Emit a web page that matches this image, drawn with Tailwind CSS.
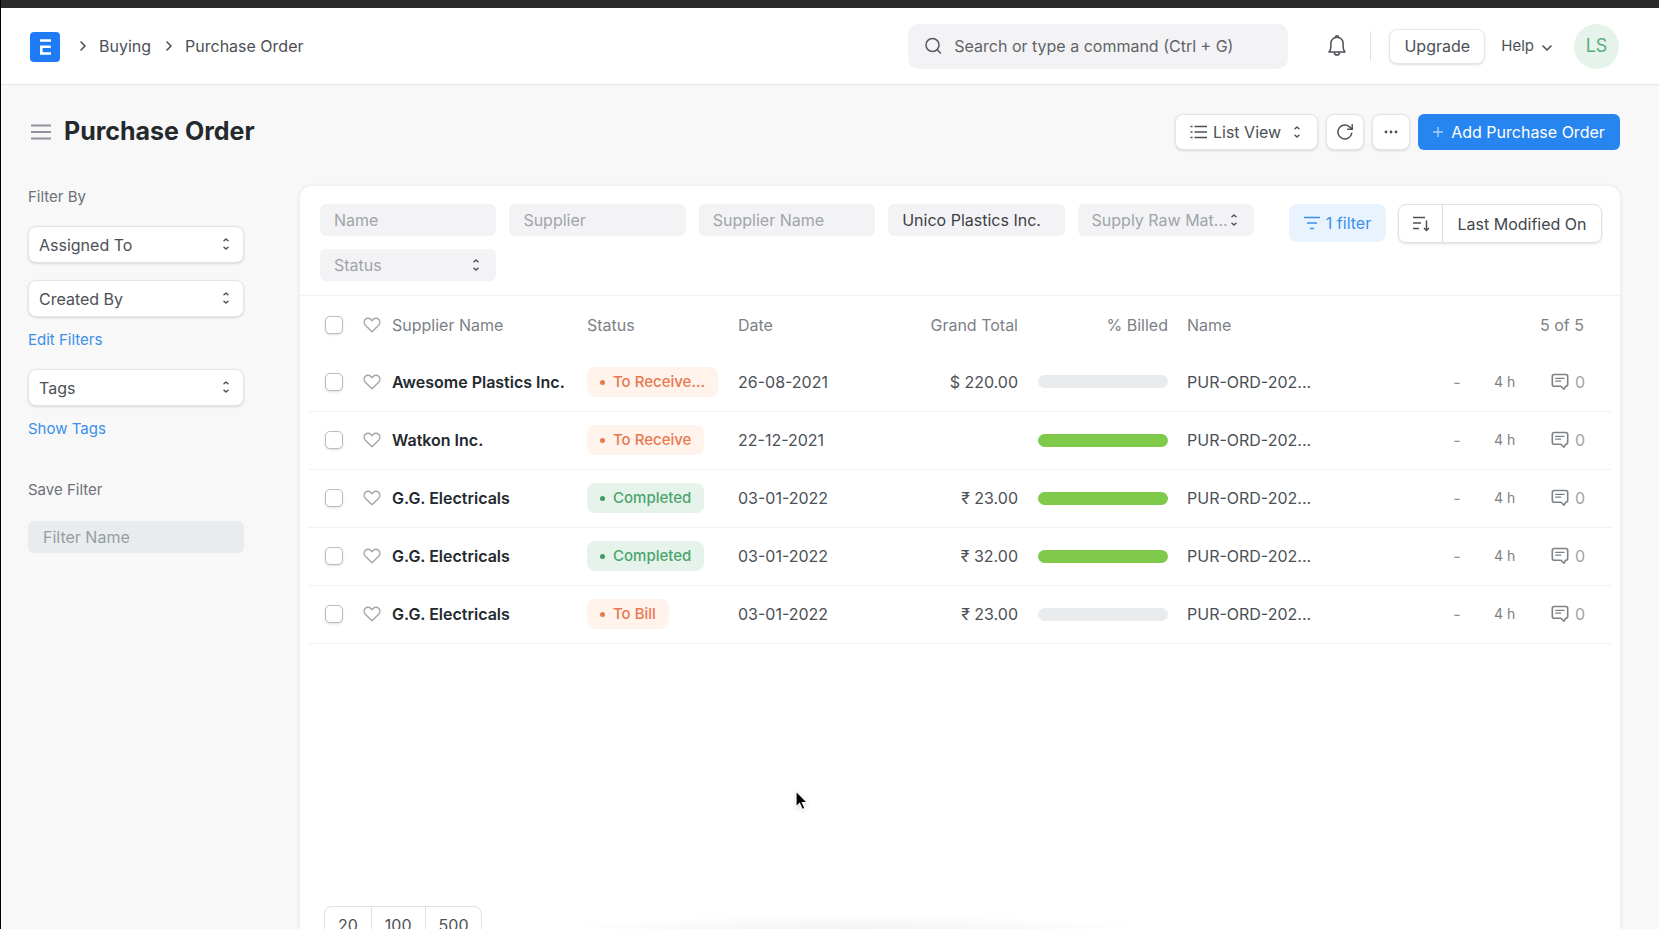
<!DOCTYPE html>
<html lang="en">
<head>
<meta charset="utf-8">
<meta name="viewport" content="width=device-width, initial-scale=1">
<title>Purchase Order</title>
<script src="https://cdn.jsdelivr.net/npm/@tailwindcss/browser@4"></script>
</head>
<body class="h-screen overflow-hidden bg-[#f8f8f8] font-['Inter','Noto_Sans',sans-serif] text-base text-[#4c5055]">

<svg class="hidden" aria-hidden="true">
  <symbol id="updown" viewBox="0 0 8 14"><path d="M2 3.800 4 2l2 1.800M2 10.200 4 12l2-1.800" fill="none" stroke="currentColor" stroke-width="1.500" stroke-linecap="round" stroke-linejoin="round"/></symbol>
  <symbol id="right" viewBox="0 0 8 12"><path d="M2 2l4 4-4 4" fill="none" stroke="currentColor" stroke-width="1.600" stroke-linecap="round" stroke-linejoin="round"/></symbol>
  <symbol id="heart" viewBox="0 0 18 16"><path d="M9 14.800 2.300 8.200C.8 6.600.7 4.100 2.200 2.500c1.500-1.600 4.100-1.600 5.600 0L9 3.600l1.200-1.100c1.500-1.600 4.100-1.600 5.600 0 1.500 1.600 1.400 4.100-.1 5.700L9 14.800Z" fill="none" stroke="currentColor" stroke-width="1.500" stroke-linejoin="round"/></symbol>
  <symbol id="comment" viewBox="0 0 18 18"><path d="M3.300 1.500h11.400c1.200 0 2 .8 2 2v7.700c0 1.200-.8 2-2 2v0l-1.700 3-3-3H3.300c-1.200 0-2-.8-2-2V3.500c0-1.200.8-2 2-2Z" fill="none" stroke="currentColor" stroke-width="1.600" stroke-linejoin="round"/><path d="M4.700 5.400h8.300M4.700 8.200h5" stroke="currentColor" stroke-width="1.300" stroke-linecap="round"/></symbol>
</svg>

<div class="flex h-full flex-col border-l border-black">
  <div class="h-2 shrink-0 bg-[#2b2b2b]"></div>

  <header class="flex h-[77px] shrink-0 items-center border-b border-[#e6e8e8] bg-white pr-10 pl-[29px]">
    <a href="#" aria-label="Home" class="mt-[2px] block size-[30px]">
      <svg viewBox="0 0 30 30" class="size-full"><rect width="30" height="30" rx="4" fill="#1f7af5"/><path d="M10 8.500h11M10 14.800h10.700M11.300 14.800v6.700h9.700" fill="none" stroke="#fff" stroke-width="2.600"/></svg>
    </a>
    <nav class="flex items-center" aria-label="Breadcrumb">
      <svg class="ml-[19px] h-3 w-2"><use href="#right"/></svg>
      <a href="#" class="ml-3">Buying</a>
      <svg class="ml-[14px] h-3 w-2"><use href="#right"/></svg>
      <a href="#" class="ml-3">Purchase Order</a>
    </nav>
    <div class="ml-auto flex items-center">
      <label class="flex h-[45px] w-[380px] items-center rounded-[10px] bg-[#f3f3f5] pr-4 pl-4 text-[#555a60]">
        <svg viewBox="0 0 18 18" class="size-[18px] shrink-0"><circle cx="8.500" cy="8" r="6.500" fill="none" stroke="currentColor" stroke-width="1.500"/><path d="m13.200 12.700 3.300 3.300" stroke="currentColor" stroke-width="1.500" stroke-linecap="round"/></svg>
        <input type="text" aria-label="Search" placeholder="Search or type a command (Ctrl + G)" class="ml-3 min-w-0 flex-1 bg-transparent outline-none placeholder:text-[#5f6368]">
      </label>
      <button aria-label="Notifications" class="ml-10 text-[#4c5055]">
        <svg viewBox="0 0 18 22" class="h-[22px] w-[18px]"><path d="M1 17h16c-1.500-1.300-1.900-3.200-1.900-5.400V8.200c0-3.300-2.700-5.900-6.100-5.900S2.900 4.900 2.900 8.200v3.400c0 2.200-.4 4.100-1.900 5.400Z" fill="none" stroke="currentColor" stroke-width="1.500" stroke-linejoin="round"/><path d="M7.500 2.200C7.500 1.300 8.100.8 9 .8s1.500.5 1.500 1.400M6.300 17.300c.2 1.600 1.200 2.700 2.700 2.700s2.500-1.100 2.700-2.700" fill="none" stroke="currentColor" stroke-width="1.500"/></svg>
      </button>
      <div class="ml-6 h-[30px] w-px bg-[#dfe1e3]"></div>
      <button class="ml-[18px] h-[35px] w-[96px] rounded-lg border border-[#e4e6e8] bg-white shadow-sm">Upgrade</button>
      <button class="ml-4 flex items-center gap-2 text-[15px]">Help
        <svg viewBox="0 0 10 6" class="mt-1 h-[6px] w-[10px]"><path d="m1 1 4 4 4-4" fill="none" stroke="currentColor" stroke-width="1.600" stroke-linecap="round" stroke-linejoin="round"/></svg>
      </button>
      <button class="ml-[22px] size-[45px] rounded-full bg-[#e6f3ea] text-lg text-[#59ac7b]">LS</button>
    </div>
  </header>

  <div class="flex h-[95px] shrink-0 items-center pr-[39px] pb-[2px] pl-[30px]">
    <button aria-label="Toggle sidebar" class="text-[#8f959b]"><svg viewBox="0 0 20 16" class="h-4 w-5"><path d="M0 1.500h20M0 8h20M0 14.500h20" stroke="currentColor" stroke-width="1.800"/></svg></button>
    <h1 class="ml-[13px] text-[25px] font-bold text-[#24292e]">Purchase Order</h1>
    <div class="ml-auto flex gap-2">
      <button class="flex h-9 w-[143px] items-center rounded-lg border border-[#e2e4e6] bg-white pr-4 pl-[14px] shadow-sm">
        <svg viewBox="0 0 17 14" class="mr-[6px] h-[14px] w-[17px]"><path d="M4.500 1.500H17M4.500 7H17M4.500 12.500H17M.5 1.500h2M.5 7h2M.5 12.500h2" stroke="currentColor" stroke-width="1.500"/></svg>
        List View
        <svg class="ml-auto h-[14px] w-2"><use href="#updown"/></svg>
      </button>
      <button aria-label="Refresh" class="flex h-9 w-[38px] items-center justify-center rounded-lg border border-[#e2e4e6] bg-white shadow-sm">
        <svg viewBox="0 0 18 18" class="size-[18px]"><path d="M15.800 10.200A7 7 0 1 1 14.200 4.400L15.800 6" fill="none" stroke="currentColor" stroke-width="1.500" stroke-linecap="round"/><path d="M16.200 1.800v4.400h-4.400" fill="none" stroke="currentColor" stroke-width="1.500" stroke-linecap="round"/></svg>
      </button>
      <button aria-label="More" class="flex h-9 w-[38px] items-center justify-center rounded-lg border border-[#e2e4e6] bg-white shadow-sm">
        <svg viewBox="0 0 14 4" class="h-1 w-[14px]"><g fill="currentColor"><circle cx="2" cy="2" r="1.400"/><circle cx="7" cy="2" r="1.400"/><circle cx="12" cy="2" r="1.400"/></g></svg>
      </button>
      <button class="flex h-9 w-[202px] items-center justify-center gap-2 rounded-md bg-[#2685ee] text-white">
        <svg viewBox="0 0 10 10" class="size-[10px]"><path d="M5 0v10M0 5h10" stroke="#a9d0fb" stroke-width="1.400"/></svg>Add Purchase Order
      </button>
    </div>
  </div>

  <div class="flex min-h-0 flex-1 pr-[39px] pl-[27px]">
    <aside class="w-[216px] shrink-0 pt-[5px]">
      <h2 class="text-[15px] leading-6 text-[#6c7278]">Filter By</h2>
      <div class="relative mt-[17px]">
        <select aria-label="Assigned To" class="h-[37px] w-full appearance-none rounded-lg border border-[#e2e4e6] bg-white px-[10px] shadow-sm"><option>Assigned To</option></select>
        <svg class="pointer-events-none absolute top-[11px] right-[14px] h-[14px] w-2"><use href="#updown"/></svg>
      </div>
      <div class="relative mt-[17px]">
        <select aria-label="Created By" class="h-[37px] w-full appearance-none rounded-lg border border-[#e2e4e6] bg-white px-[10px] shadow-sm"><option>Created By</option></select>
        <svg class="pointer-events-none absolute top-[11px] right-[14px] h-[14px] w-2"><use href="#updown"/></svg>
      </div>
      <a href="#" class="mt-[11px] block text-[15px] leading-6 text-[#3b8fea]">Edit Filters</a>
      <div class="relative mt-[17px]">
        <select aria-label="Tags" class="h-[37px] w-full appearance-none rounded-lg border border-[#e2e4e6] bg-white px-[10px] shadow-sm"><option>Tags</option></select>
        <svg class="pointer-events-none absolute top-[11px] right-[14px] h-[14px] w-2"><use href="#updown"/></svg>
      </div>
      <a href="#" class="mt-[11px] block text-[15px] leading-6 text-[#3b8fea]">Show Tags</a>
      <label for="filter-name" class="mt-[37px] block text-[15px] leading-6 text-[#6c7278]">Save Filter</label>
      <input id="filter-name" type="text" placeholder="Filter Name" class="mt-[19px] h-8 w-full rounded-md bg-[#e9ecee] px-[15px] outline-none placeholder:text-[#969ca2]">
    </aside>

    <main class="mt-[6px] ml-14 flex min-w-0 flex-1 flex-col rounded-t-xl bg-white pt-[18px] shadow-[0_0_5px_rgba(0,0,0,0.09)]">
      <div class="flex shrink-0 border-b border-[#f2f3f4] pr-[18px] pb-[14px] pl-5">
        <div class="grid w-[934px] grid-cols-5 gap-[13px]">
          <input aria-label="Name" placeholder="Name" class="h-8 min-w-0 rounded-md bg-[#f3f3f5] px-[14px] outline-none placeholder:text-[#a0a4a9]">
          <input aria-label="Supplier" placeholder="Supplier" class="h-8 min-w-0 rounded-md bg-[#f3f3f5] px-[14px] outline-none placeholder:text-[#a0a4a9]">
          <input aria-label="Supplier Name" placeholder="Supplier Name" class="h-8 min-w-0 rounded-md bg-[#f3f3f5] px-[14px] outline-none placeholder:text-[#a0a4a9]">
          <input aria-label="Company" value="Unico Plastics Inc." class="h-8 min-w-0 rounded-md bg-[#f3f3f5] px-[14px] text-[#3c4045] outline-none">
          <div class="relative">
            <select aria-label="Supply Raw Materials" class="h-8 w-full appearance-none rounded-md bg-[#f3f3f5] px-[14px] text-[#a0a4a9]"><option>Supply Raw Mat...</option></select>
            <svg class="pointer-events-none absolute top-[9px] right-4 h-[14px] w-2"><use href="#updown"/></svg>
          </div>
          <div class="relative">
            <select aria-label="Status" class="h-8 w-full appearance-none rounded-md bg-[#f3f3f5] px-[14px] text-[#a0a4a9]"><option>Status</option></select>
            <svg class="pointer-events-none absolute top-[9px] right-4 h-[14px] w-2"><use href="#updown"/></svg>
          </div>
        </div>
        <div class="ml-auto flex">
          <button class="mr-3 flex h-[38px] w-[97px] items-center justify-center gap-[6px] rounded-lg bg-[#e9f3fe] text-[#3b8fea]">
            <svg viewBox="0 0 16 14" class="h-[14px] w-4"><path d="M0 1.500h16M3 7h10M6 12.500h4" stroke="currentColor" stroke-width="1.600"/></svg>1 filter
          </button>
          <div class="flex h-[39px] rounded-lg border border-[#e0e2e4] shadow-sm">
            <button aria-label="Sort direction" class="flex w-11 items-center justify-center border-r border-[#dcdee0]">
              <svg viewBox="0 0 18 16" class="h-4 w-[18px]"><path d="M1 1.500h12M1 7h8M1 12.500h6M14.500 4.500v10M12 12l2.500 2.500L17 12" fill="none" stroke="currentColor" stroke-width="1.500"/></svg>
            </button>
            <button class="w-[158px] text-[#43474c]">Last Modified On</button>
          </div>
        </div>
      </div>

      <div class="min-h-[610px] shrink-0 px-2">
        <table class="w-full table-fixed text-left">
          <colgroup><col class="w-[55px]"><col class="w-[29px]"><col class="w-[195px]"><col class="w-[151px]"><col class="w-[130px]"><col class="w-[150px]"><col class="w-[150px]"><col><col class="w-[74px]"><col class="w-[48px]"><col class="w-[70px]"></colgroup>
          <thead>
            <tr class="h-[57px] text-[#7c8186] [&>th]:p-0 [&>th]:font-normal">
              <th><input type="checkbox" aria-label="Select all" class="ml-[17px] block size-[18px] appearance-none rounded-[5px] border border-[#b9bdc1] bg-white shadow-sm"></th>
              <th><button aria-label="Liked" class="block text-[#a3a8ad]"><svg class="h-4 w-[18px]"><use href="#heart"/></svg></button></th>
              <th>Supplier Name</th><th>Status</th><th>Date</th>
              <th><div class="text-right">Grand Total</div></th>
              <th><div class="text-right">% Billed</div></th>
              <th><div class="pl-[19px]">Name</div></th>
              <th colspan="3"><div class="pr-7 text-right">5 of 5</div></th>
            </tr>
          </thead>
          <tbody class="[&_td]:p-0">
            <tr class="h-[58px] border-b border-[#f2f3f4]">
              <td><input type="checkbox" aria-label="Select Awesome Plastics Inc." class="ml-[17px] block size-[18px] appearance-none rounded-[5px] border border-[#b9bdc1] bg-white shadow-sm"></td>
              <td><button aria-label="Like" class="block text-[#a3a8ad]"><svg class="h-4 w-[18px]"><use href="#heart"/></svg></button></td>
              <td class="font-semibold whitespace-nowrap text-[#24292e]">Awesome Plastics Inc.</td>
              <td><span class="inline-flex h-[30px] items-center gap-2 rounded-lg bg-[#fff3ec] px-[13px] text-[15px] font-medium text-[#e8794f]"><i class="size-[5px] rounded-full bg-[#e8794f]"></i>To Receive...</span></td>
              <td>26-08-2021</td>
              <td class="text-right">$ 220.00</td>
              <td><div class="ml-5 h-[13px] rounded-full bg-[#e9ebec]"></div></td>
              <td><a href="#" class="pl-[19px]">PUR-ORD-202...</a></td>
              <td class="text-center text-[#8d9298]">-</td>
              <td class="text-sm text-[#7c8186]">4 h</td>
              <td><div class="flex items-center justify-end gap-[6px] pr-[27px] text-[#7c8186]"><svg class="size-[18px]"><use href="#comment"/></svg><span class="text-[#a0a4a9]">0</span></div></td>
            </tr>
            <tr class="h-[58px] border-b border-[#f2f3f4]">
              <td><input type="checkbox" aria-label="Select Watkon Inc." class="ml-[17px] block size-[18px] appearance-none rounded-[5px] border border-[#b9bdc1] bg-white shadow-sm"></td>
              <td><button aria-label="Like" class="block text-[#a3a8ad]"><svg class="h-4 w-[18px]"><use href="#heart"/></svg></button></td>
              <td class="font-semibold whitespace-nowrap text-[#24292e]">Watkon Inc.</td>
              <td><span class="inline-flex h-[30px] items-center gap-2 rounded-lg bg-[#fff3ec] px-[13px] text-[15px] font-medium text-[#e8794f]"><i class="size-[5px] rounded-full bg-[#e8794f]"></i>To Receive</span></td>
              <td>22-12-2021</td>
              <td></td>
              <td><div class="ml-5 h-[13px] rounded-full bg-[#7fc94b]"></div></td>
              <td><a href="#" class="pl-[19px]">PUR-ORD-202...</a></td>
              <td class="text-center text-[#8d9298]">-</td>
              <td class="text-sm text-[#7c8186]">4 h</td>
              <td><div class="flex items-center justify-end gap-[6px] pr-[27px] text-[#7c8186]"><svg class="size-[18px]"><use href="#comment"/></svg><span class="text-[#a0a4a9]">0</span></div></td>
            </tr>
            <tr class="h-[58px] border-b border-[#f2f3f4]">
              <td><input type="checkbox" aria-label="Select G.G. Electricals" class="ml-[17px] block size-[18px] appearance-none rounded-[5px] border border-[#b9bdc1] bg-white shadow-sm"></td>
              <td><button aria-label="Like" class="block text-[#a3a8ad]"><svg class="h-4 w-[18px]"><use href="#heart"/></svg></button></td>
              <td class="font-semibold whitespace-nowrap text-[#24292e]">G.G. Electricals</td>
              <td><span class="inline-flex h-[30px] items-center gap-2 rounded-lg bg-[#e6f3ea] px-[13px] text-[15px] font-medium text-[#4aa56e]"><i class="size-[5px] rounded-full bg-[#3c9c63]"></i>Completed</span></td>
              <td>03-01-2022</td>
              <td class="text-right">₹ 23.00</td>
              <td><div class="ml-5 h-[13px] rounded-full bg-[#7fc94b]"></div></td>
              <td><a href="#" class="pl-[19px]">PUR-ORD-202...</a></td>
              <td class="text-center text-[#8d9298]">-</td>
              <td class="text-sm text-[#7c8186]">4 h</td>
              <td><div class="flex items-center justify-end gap-[6px] pr-[27px] text-[#7c8186]"><svg class="size-[18px]"><use href="#comment"/></svg><span class="text-[#a0a4a9]">0</span></div></td>
            </tr>
            <tr class="h-[58px] border-b border-[#f2f3f4]">
              <td><input type="checkbox" aria-label="Select G.G. Electricals" class="ml-[17px] block size-[18px] appearance-none rounded-[5px] border border-[#b9bdc1] bg-white shadow-sm"></td>
              <td><button aria-label="Like" class="block text-[#a3a8ad]"><svg class="h-4 w-[18px]"><use href="#heart"/></svg></button></td>
              <td class="font-semibold whitespace-nowrap text-[#24292e]">G.G. Electricals</td>
              <td><span class="inline-flex h-[30px] items-center gap-2 rounded-lg bg-[#e6f3ea] px-[13px] text-[15px] font-medium text-[#4aa56e]"><i class="size-[5px] rounded-full bg-[#3c9c63]"></i>Completed</span></td>
              <td>03-01-2022</td>
              <td class="text-right">₹ 32.00</td>
              <td><div class="ml-5 h-[13px] rounded-full bg-[#7fc94b]"></div></td>
              <td><a href="#" class="pl-[19px]">PUR-ORD-202...</a></td>
              <td class="text-center text-[#8d9298]">-</td>
              <td class="text-sm text-[#7c8186]">4 h</td>
              <td><div class="flex items-center justify-end gap-[6px] pr-[27px] text-[#7c8186]"><svg class="size-[18px]"><use href="#comment"/></svg><span class="text-[#a0a4a9]">0</span></div></td>
            </tr>
            <tr class="h-[58px] border-b border-[#f2f3f4]">
              <td><input type="checkbox" aria-label="Select G.G. Electricals" class="ml-[17px] block size-[18px] appearance-none rounded-[5px] border border-[#b9bdc1] bg-white shadow-sm"></td>
              <td><button aria-label="Like" class="block text-[#a3a8ad]"><svg class="h-4 w-[18px]"><use href="#heart"/></svg></button></td>
              <td class="font-semibold whitespace-nowrap text-[#24292e]">G.G. Electricals</td>
              <td><span class="inline-flex h-[30px] items-center gap-2 rounded-lg bg-[#fff3ec] px-[13px] text-[15px] font-medium text-[#e8794f]"><i class="size-[5px] rounded-full bg-[#e8794f]"></i>To Bill</span></td>
              <td>03-01-2022</td>
              <td class="text-right">₹ 23.00</td>
              <td><div class="ml-5 h-[13px] rounded-full bg-[#e9ebec]"></div></td>
              <td><a href="#" class="pl-[19px]">PUR-ORD-202...</a></td>
              <td class="text-center text-[#8d9298]">-</td>
              <td class="text-sm text-[#7c8186]">4 h</td>
              <td><div class="flex items-center justify-end gap-[6px] pr-[27px] text-[#7c8186]"><svg class="size-[18px]"><use href="#comment"/></svg><span class="text-[#a0a4a9]">0</span></div></td>
            </tr>
          </tbody>
        </table>
      </div>

      <div class="ml-6 flex h-[38px] shrink-0 self-start rounded-lg border border-[#dfe1e3] [&>button]:px-[13px]">
        <button>20</button><button class="border-x border-[#dfe1e3]">100</button><button>500</button>
      </div>
    </main>
  </div>
</div>

<div class="pointer-events-none absolute bottom-0 left-1/3 h-[14px] w-[600px] bg-radial-[at_50%_100%] from-black/5 to-transparent to-70%"></div>
<svg class="pointer-events-none absolute top-[789px] left-[794px] h-[24px] w-[16px] drop-shadow" viewBox="0 0 16 24" aria-hidden="true"><path d="M2 2v16l3.600-3.400 2.600 6 2.800-1.200-2.600-5.800h5L2 2Z" fill="#000" stroke="#fff" stroke-width="1.200"/></svg>
</body>
</html>
